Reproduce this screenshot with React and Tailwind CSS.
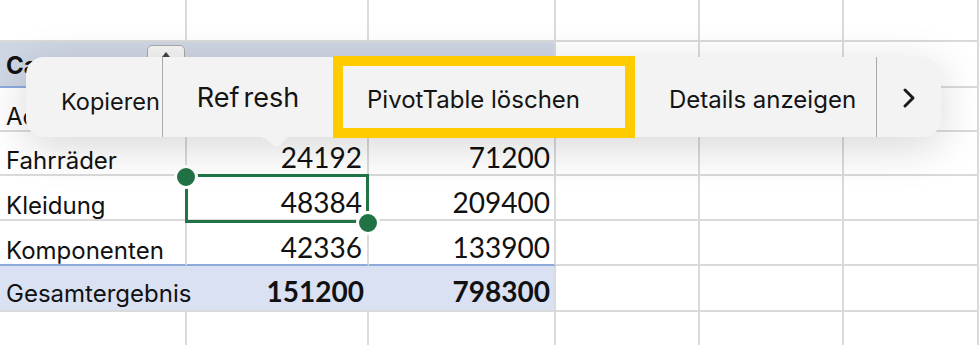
import React from "react";

const label = { fontFamily: "Inter, 'Noto Sans', sans-serif" };
const num = { fontFamily: "Lato, 'Liberation Sans', sans-serif" };

const rows = [
  ["Accessoires", "", ""],
  ["Fahrräder", "24192", "71200"],
  ["Kleidung", "48384", "209400"],
  ["Komponenten", "42336", "133900"],
];

function EmptyCells({ count, className }) {
  return Array.from({ length: count }).map((_, i) => (
    <div key={i} className={className} />
  ));
}

function ChevronRight() {
  return (
    <svg width="14" height="22" viewBox="0 0 14 22" fill="none">
      <polyline
        points="3,3 11,11 3,19"
        stroke="#1a1a1a"
        strokeWidth="3"
        strokeLinecap="round"
        strokeLinejoin="round"
      />
    </svg>
  );
}

function Sheet() {
  const grid = "border-r-2 border-b-2 border-[#dadada]";
  return (
    <div className="grid grid-cols-[187px_182px_187px_144px_144px_1fr] grid-rows-[42px_46px_44px_44px_45px_45px_46px_1fr] h-[345px]">
      {/* top blank row */}
      <EmptyCells count={6} className={grid} />

      {/* pivot header */}
      <div
        className="flex items-start bg-[#cfd6e4] border-b-2 border-[#8eaadb] pl-[6px] pt-[12px] font-bold text-[24px] leading-none text-[#111]"
        style={label}
      >
        <span>Category</span>
        <div className="ml-auto mr-[2px] -mt-[9px] w-[38px] h-[30px] rounded-[5px] border border-[#a9a9a9] bg-[#f4f4f4] flex justify-center pt-[5px]">
          <svg width="10" height="10" viewBox="0 0 10 10">
            <path d="M5 1 L9 6 L1 6 Z" fill="#444" />
          </svg>
        </div>
      </div>
      <div className="bg-[#cfd6e4] border-b-2 border-[#8eaadb]" />
      <div className="bg-[#cfd6e4] border-r-2 border-b-2 border-r-[#dadada] border-b-[#8eaadb]" />
      <EmptyCells count={3} className={grid} />

      {/* data rows */}
      {rows.map((r, i) => {
        const last = i === rows.length - 1;
        const c = last
          ? "border-r-2 border-b-2 border-r-[#dadada] border-b-[#8eaadb]"
          : grid;
        return (
          <React.Fragment key={r[0]}>
            <div
              className={`${c} flex items-end pl-[6px] pb-[1px] text-[24px] leading-none text-[#111]`}
              style={label}
            >
              {r[0]}
            </div>
            <div
              className={`${c} flex items-end justify-end pr-[5px] pb-[3px] text-[28px] leading-none text-[#111]`}
              style={num}
            >
              {r[1]}
            </div>
            <div
              className={`${c} flex items-end justify-end pr-[4px] pb-[3px] text-[28px] leading-none text-[#111]`}
              style={num}
            >
              {r[2]}
            </div>
            <EmptyCells count={3} className={grid} />
          </React.Fragment>
        );
      })}

      {/* grand total */}
      <div
        className="bg-[#d9e1f2] border-b-2 border-[#dadada] flex items-end pl-[6px] pb-[4px] text-[24px] leading-none text-[#111]"
        style={label}
      >
        <span className="relative z-[1] whitespace-nowrap">Gesamtergebnis</span>
      </div>
      <div
        className="bg-[#d9e1f2] border-b-2 border-[#dadada] flex items-end justify-end pr-[5px] pb-[5px] text-[28px] font-bold leading-none text-[#111]"
        style={num}
      >
        151200
      </div>
      <div
        className={`bg-[#d9e1f2] ${grid} flex items-end justify-end pr-[4px] pb-[5px] text-[28px] font-bold leading-none text-[#111]`}
        style={num}
      >
        798300
      </div>
      <EmptyCells count={3} className={grid} />

      {/* bottom row */}
      <EmptyCells count={6} className="border-r-2 border-[#dadada]" />
    </div>
  );
}

function ContextMenu() {
  return (
    <>
      <div
        className="absolute left-[26px] top-[57px] w-[915px] h-[80px] rounded-[18px] bg-[#f3f3f3] shadow-[0_10px_45px_rgba(0,0,0,0.16)] flex text-[#141414] z-10"
        style={label}
      >
        <div className="w-[136px] flex items-center pl-[35px] pt-[9px] text-[23.5px] whitespace-nowrap">
          Kopieren
        </div>
        <div className="w-px bg-[#a8a8a8]" />
        <div className="w-[170px] flex items-center justify-center pt-[2px] text-[27px]">
          Ref<span className="ml-[4px]">resh</span>
        </div>
        <div className="w-[302px] -my-px border-[10px] border-[#ffcc00] flex items-center pl-[24px] pt-[5px] text-[24px] whitespace-nowrap">
          PivotTable löschen
        </div>
        <div className="w-[241px] flex items-center pl-[34px] pt-[6px] text-[24px] whitespace-nowrap">
          Details anzeigen
        </div>
        <div className="w-px bg-[#a8a8a8]" />
        <div className="flex-1 flex items-center justify-center pt-[1px]">
          <ChevronRight />
        </div>
      </div>
      {/* callout tail under Refresh */}
      <svg
        className="absolute left-[252px] top-[136px] z-10"
        width="42"
        height="12"
        viewBox="0 0 42 12"
      >
        <path d="M0 0 C10 0 15 3 20 8 Q25 12 29 8 L37 0 Z" fill="#f3f3f3" />
      </svg>
    </>
  );
}

function Selection() {
  return (
    <>
      <div className="absolute left-[185px] top-[174px] w-[184px] h-[49px] border-[3px] border-[#217346]" />
      <div className="absolute left-[174px] top-[165px] w-[24px] h-[24px] rounded-full bg-[#217346] border-[3px] border-white" />
      <div className="absolute left-[356px] top-[211px] w-[24px] h-[24px] rounded-full bg-[#217346] border-[3px] border-white" />
    </>
  );
}

export default function App() {
  return (
    <div className="relative w-[979px] h-[345px] overflow-hidden bg-white">
      <Sheet />
      <Selection />
      <ContextMenu />
    </div>
  );
}
